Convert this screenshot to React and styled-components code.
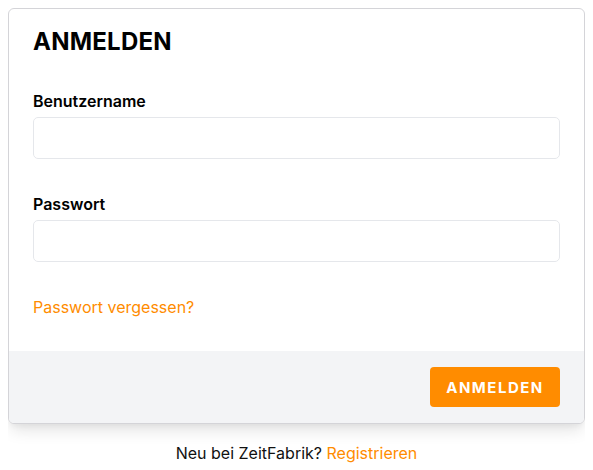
import React from 'react';
import styled, { createGlobalStyle } from 'styled-components';

const GlobalStyle = createGlobalStyle`
  body {
    margin: 8px;
    background: #ffffff;
    font-family: "Inter", "Noto Sans", sans-serif;
    color: #111111;
  }
`;

const Card = styled.div`
  background: #ffffff;
  border: 1px solid #d4d4d8;
  border-radius: 6px;
  box-shadow: 0 10px 15px -3px rgba(0, 0, 0, 0.1), 0 4px 6px -2px rgba(0, 0, 0, 0.05);
  overflow: hidden;
`;

const Body = styled.div`
  padding: 17px 24px 33px 24px;
`;

const Title = styled.h1`
  margin: 0 0 32px 0;
  font-size: 24px;
  line-height: 32px;
  font-weight: 700;
  letter-spacing: 0.01em;
  color: #000000;
`;

const Field = styled.div`
  margin-bottom: 34px;
`;

const Label = styled.label`
  display: block;
  font-size: 16px;
  line-height: 22px;
  font-weight: 600;
  color: #000000;
  margin-bottom: 5px;
`;

const Input = styled.input`
  display: block;
  box-sizing: border-box;
  width: 100%;
  height: 42px;
  border: 1px solid #e5e7eb;
  border-radius: 5px;
  padding: 0 12px;
  font-size: 15px;
  font-family: inherit;
  outline: none;
`;

const Link = styled.a`
  display: ${(p) => (p.$block ? 'block' : 'inline')};
  line-height: 22px;
  color: #ff8c00;
  text-decoration: none;
  font-size: 16px;
  cursor: pointer;
`;

const Footer = styled.div`
  display: flex;
  justify-content: flex-end;
  background: #f3f4f6;
  padding: 16px 24px;
`;

const Button = styled.button`
  width: 130px;
  height: 40px;
  border: none;
  border-radius: 4px;
  background: #ff8c00;
  color: #ffffff;
  font-family: inherit;
  font-size: 15px;
  font-weight: 700;
  letter-spacing: 0.1em;
  cursor: pointer;
`;

const Bottom = styled.p`
  margin: 18px 0 0 0;
  text-align: center;
  font-size: 16px;
  line-height: 22px;
  color: #111111;
`;

const App = () => {
  return (
    <>
      <GlobalStyle />
      <Card>
        <Body>
          <Title>ANMELDEN</Title>
          <Field>
            <Label>Benutzername</Label>
            <Input type="text" />
          </Field>
          <Field>
            <Label>Passwort</Label>
            <Input type="password" />
          </Field>
          <Link $block>Passwort vergessen?</Link>
        </Body>
        <Footer>
          <Button>ANMELDEN</Button>
        </Footer>
      </Card>
      <Bottom>
        Neu bei ZeitFabrik? <Link>Registrieren</Link>
      </Bottom>
    </>
  );
};

export default App;
